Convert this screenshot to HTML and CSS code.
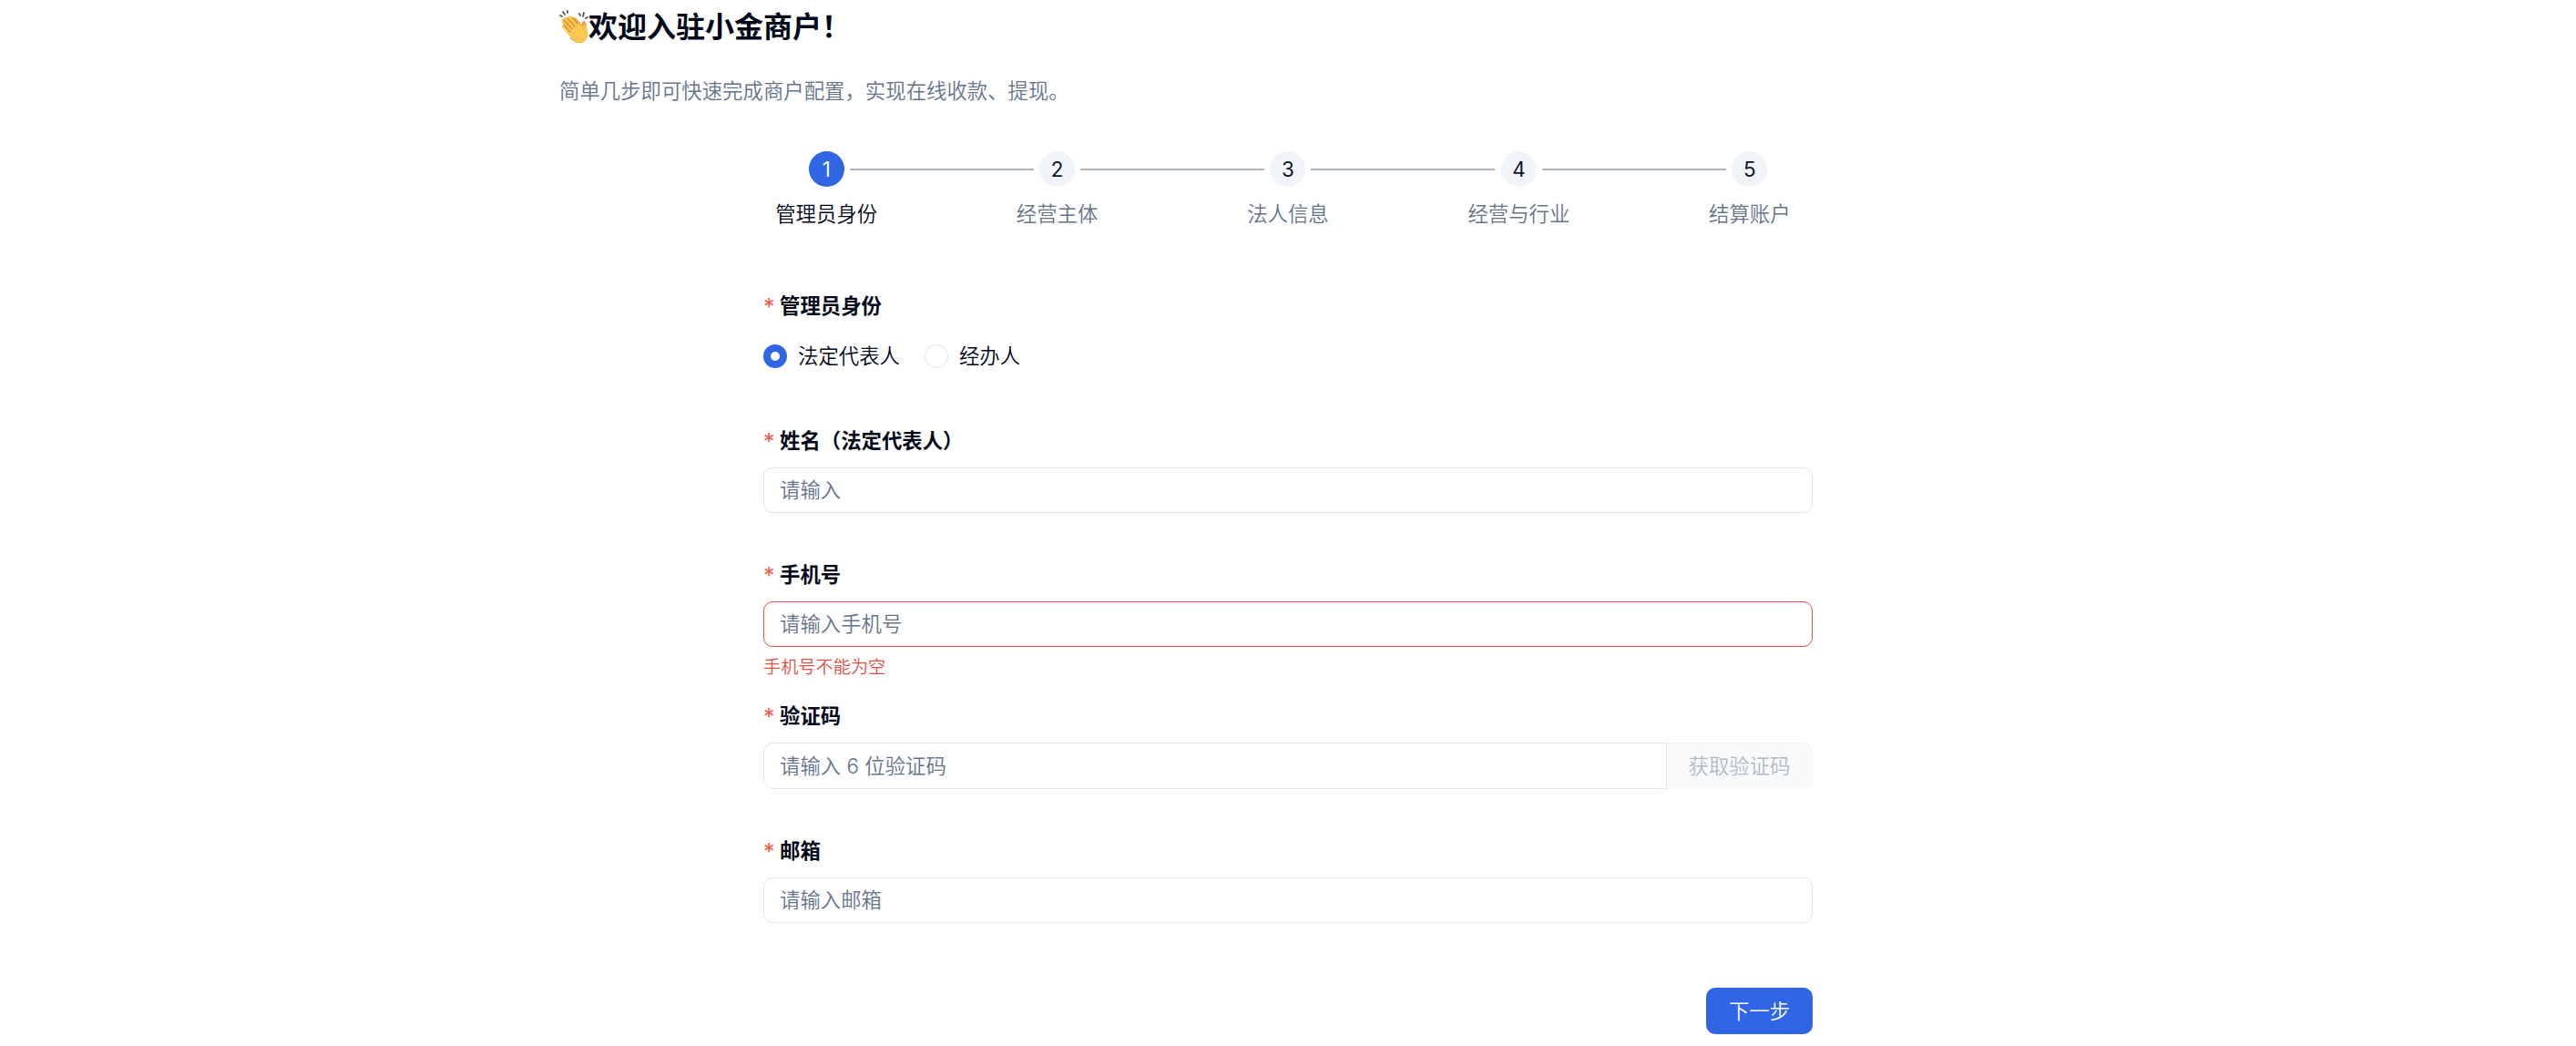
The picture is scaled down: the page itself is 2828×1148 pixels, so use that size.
FILE: index.html
```
<!DOCTYPE html>
<html lang="zh-CN">

<head>
    <meta charset="UTF-8">
    <title>小金商户</title>
    <link rel="stylesheet" href="styles.css">
</head>

<body>
    <div class="container">
        <h1>
            <svg class="clap" viewBox="0 0 32 38">
                <g stroke="#555" stroke-width="1.8" stroke-linecap="round">
                    <path d="M1 6l2 1M4 2l2 3M9 1v2M22 4l1 2M27 3l-1 4M31 8l-2 1" />
                </g>
                <path fill="#e9a33b" d="M15 9c2-2 4 0 5 2l5 5c0-2 0-4 2-4 3 1 3 6 4 11 1 6-1 10-6 13-5 1-9-1-13-5z" />
                <path fill="#fbc751" d="M4 10c1-3 4-2 5-1 1-3 4-3 6-1l11 11c0-3 1-4 3-3 1 3 2 6 2 9 0 6-3 11-8 11-5-1-9-4-13-9l-6-7c-2-3 0-4 1-4-3-3-3-5-1-6z" />
                <path fill="none" stroke="#c97b25" stroke-width="1.1" stroke-linecap="round" d="M5 16l7 8M5 11l9 10M9 9l8 9M15 9l5 6" />
            </svg>
            <span>欢迎入驻小金商户！</span>
        </h1>
        <p class="desc">简单几步即可快速完成商户配置，实现在线收款、提现。</p>

        <div class="steps">
            <div class="step active">
                <div class="num">1</div>
                <div class="name">管理员身份</div>
            </div>
            <div class="step">
                <div class="num">2</div>
                <div class="name">经营主体</div>
            </div>
            <div class="step">
                <div class="num">3</div>
                <div class="name">法人信息</div>
            </div>
            <div class="step">
                <div class="num">4</div>
                <div class="name">经营与行业</div>
            </div>
            <div class="step">
                <div class="num">5</div>
                <div class="name">结算账户</div>
            </div>
        </div>

        <form>
            <div class="form-item">
                <div class="label">管理员身份</div>
                <div class="radio-group">
                    <label><input type="radio" name="role" value="1" checked>法定代表人</label>
                    <label><input type="radio" name="role" value="2">经办人</label>
                </div>
            </div>
            <div class="form-item">
                <label class="label" for="name">姓名（法定代表人）</label>
                <input type="text" id="name" placeholder="请输入">
            </div>
            <div class="form-item error">
                <label class="label" for="phone">手机号</label>
                <input type="text" id="phone" placeholder="请输入手机号">
                <div class="message">手机号不能为空</div>
            </div>
            <div class="form-item">
                <label class="label" for="code">验证码</label>
                <div class="input-group">
                    <input type="text" id="code" placeholder="请输入 6 位验证码">
                    <button type="button" class="code-button" disabled>获取验证码</button>
                </div>
            </div>
            <div class="form-item">
                <label class="label" for="email">邮箱</label>
                <input type="text" id="email" placeholder="请输入邮箱">
            </div>
            <div class="footer">
                <button type="button" class="next-button">下一步</button>
            </div>
        </form>
    </div>
</body>

</html>
```
FILE: styles.css
```
* {
    box-sizing: border-box;
}

body {
    margin: 0;
    background-color: #fff;
    color: #020817;
    font-family: Inter, "Noto Sans CJK SC", sans-serif;
    font-size: 22.4px;
    font-weight: 350;
    line-height: 32px;
}

.container {
    width: 1600px;
    margin: 0 auto;
}

h1 {
    display: flex;
    align-items: center;
    height: 58px;
    margin: 0;
    padding-top: 2px;
    font-size: 32px;
    font-weight: 600;
}

.clap {
    width: 32px;
    height: 38px;
}

.desc {
    margin: 26px 0 50px;
    color: #64748b;
}

.steps {
    display: grid;
    grid-template-columns: repeat(5, 1fr);
    width: 1267px;
    margin: 0 auto;
}

.step {
    text-align: center;
    color: #64748b;
}

.num {
    display: flex;
    align-items: center;
    justify-content: center;
    position: relative;
    width: 39px;
    height: 39px;
    margin: 0 auto 14px;
    border-radius: 50%;
    background-color: #f1f5f9;
    color: #0f172a;
    font-weight: 400;
}

.step:not(:last-child) .num::after {
    content: "";
    position: absolute;
    left: 45px;
    top: 19px;
    width: 202px;
    height: 2px;
    background-color: #abb3c4;
}

.step.active {
    color: #020817;
}

.step.active .num {
    background-color: #3065e4;
    color: #f8fafc;
}

form {
    width: 1152px;
    margin: 69px auto 0;
}

.form-item {
    height: 147.6px;
}

.form-item.error {
    height: 155px;
}

.label {
    display: block;
    height: 45px;
    font-weight: 600;
}

.label::before {
    content: "*";
    display: inline-block;
    width: 18px;
    color: #ef5a50;
    font-size: 25px;
    font-weight: 400;
    line-height: 20px;
    vertical-align: -2px;
}

.radio-group {
    display: flex;
    gap: 26px;
    padding-top: 10px;
}

.radio-group label {
    display: flex;
    align-items: center;
    gap: 12px;
}

.radio-group label + label {
    margin-left: 1px;
}

input[type="radio"] {
    appearance: none;
    width: 26px;
    height: 26px;
    margin: 0;
    border: 1px solid #e2e4e8;
    border-radius: 50%;
}

input[type="radio"]:checked {
    border: 8px solid #3065e4;
}

input[type="text"] {
    display: block;
    width: 100%;
    height: 50px;
    padding: 0 18px 1px 17px;
    border: 1px solid #e2e4e8;
    border-radius: 10px;
    font: inherit;
}

input::placeholder {
    color: #64748b;
    opacity: 1;
}

.error input[type="text"] {
    border-color: #df5149;
}

.message {
    margin-top: 6px;
    color: #df5149;
    font-size: 19.2px;
}

.input-group {
    display: flex;
}

.input-group input[type="text"] {
    flex: 1;
    height: 51px;
    border-radius: 10px 0 0 10px;
}

button {
    height: 51px;
    border: none;
    border-radius: 10px;
    font: inherit;
}

.code-button {
    width: 160px;
    border: 1px solid #f1f5f9;
    border-left: none;
    border-radius: 0 10px 10px 0;
    background-color: #f8fafc;
    color: #b3bac7;
}

.footer {
    display: flex;
    justify-content: flex-end;
    padding-top: 19px;
}

.next-button {
    width: 117px;
    background-color: #3065e4;
    color: #f8fafc;
}
```
